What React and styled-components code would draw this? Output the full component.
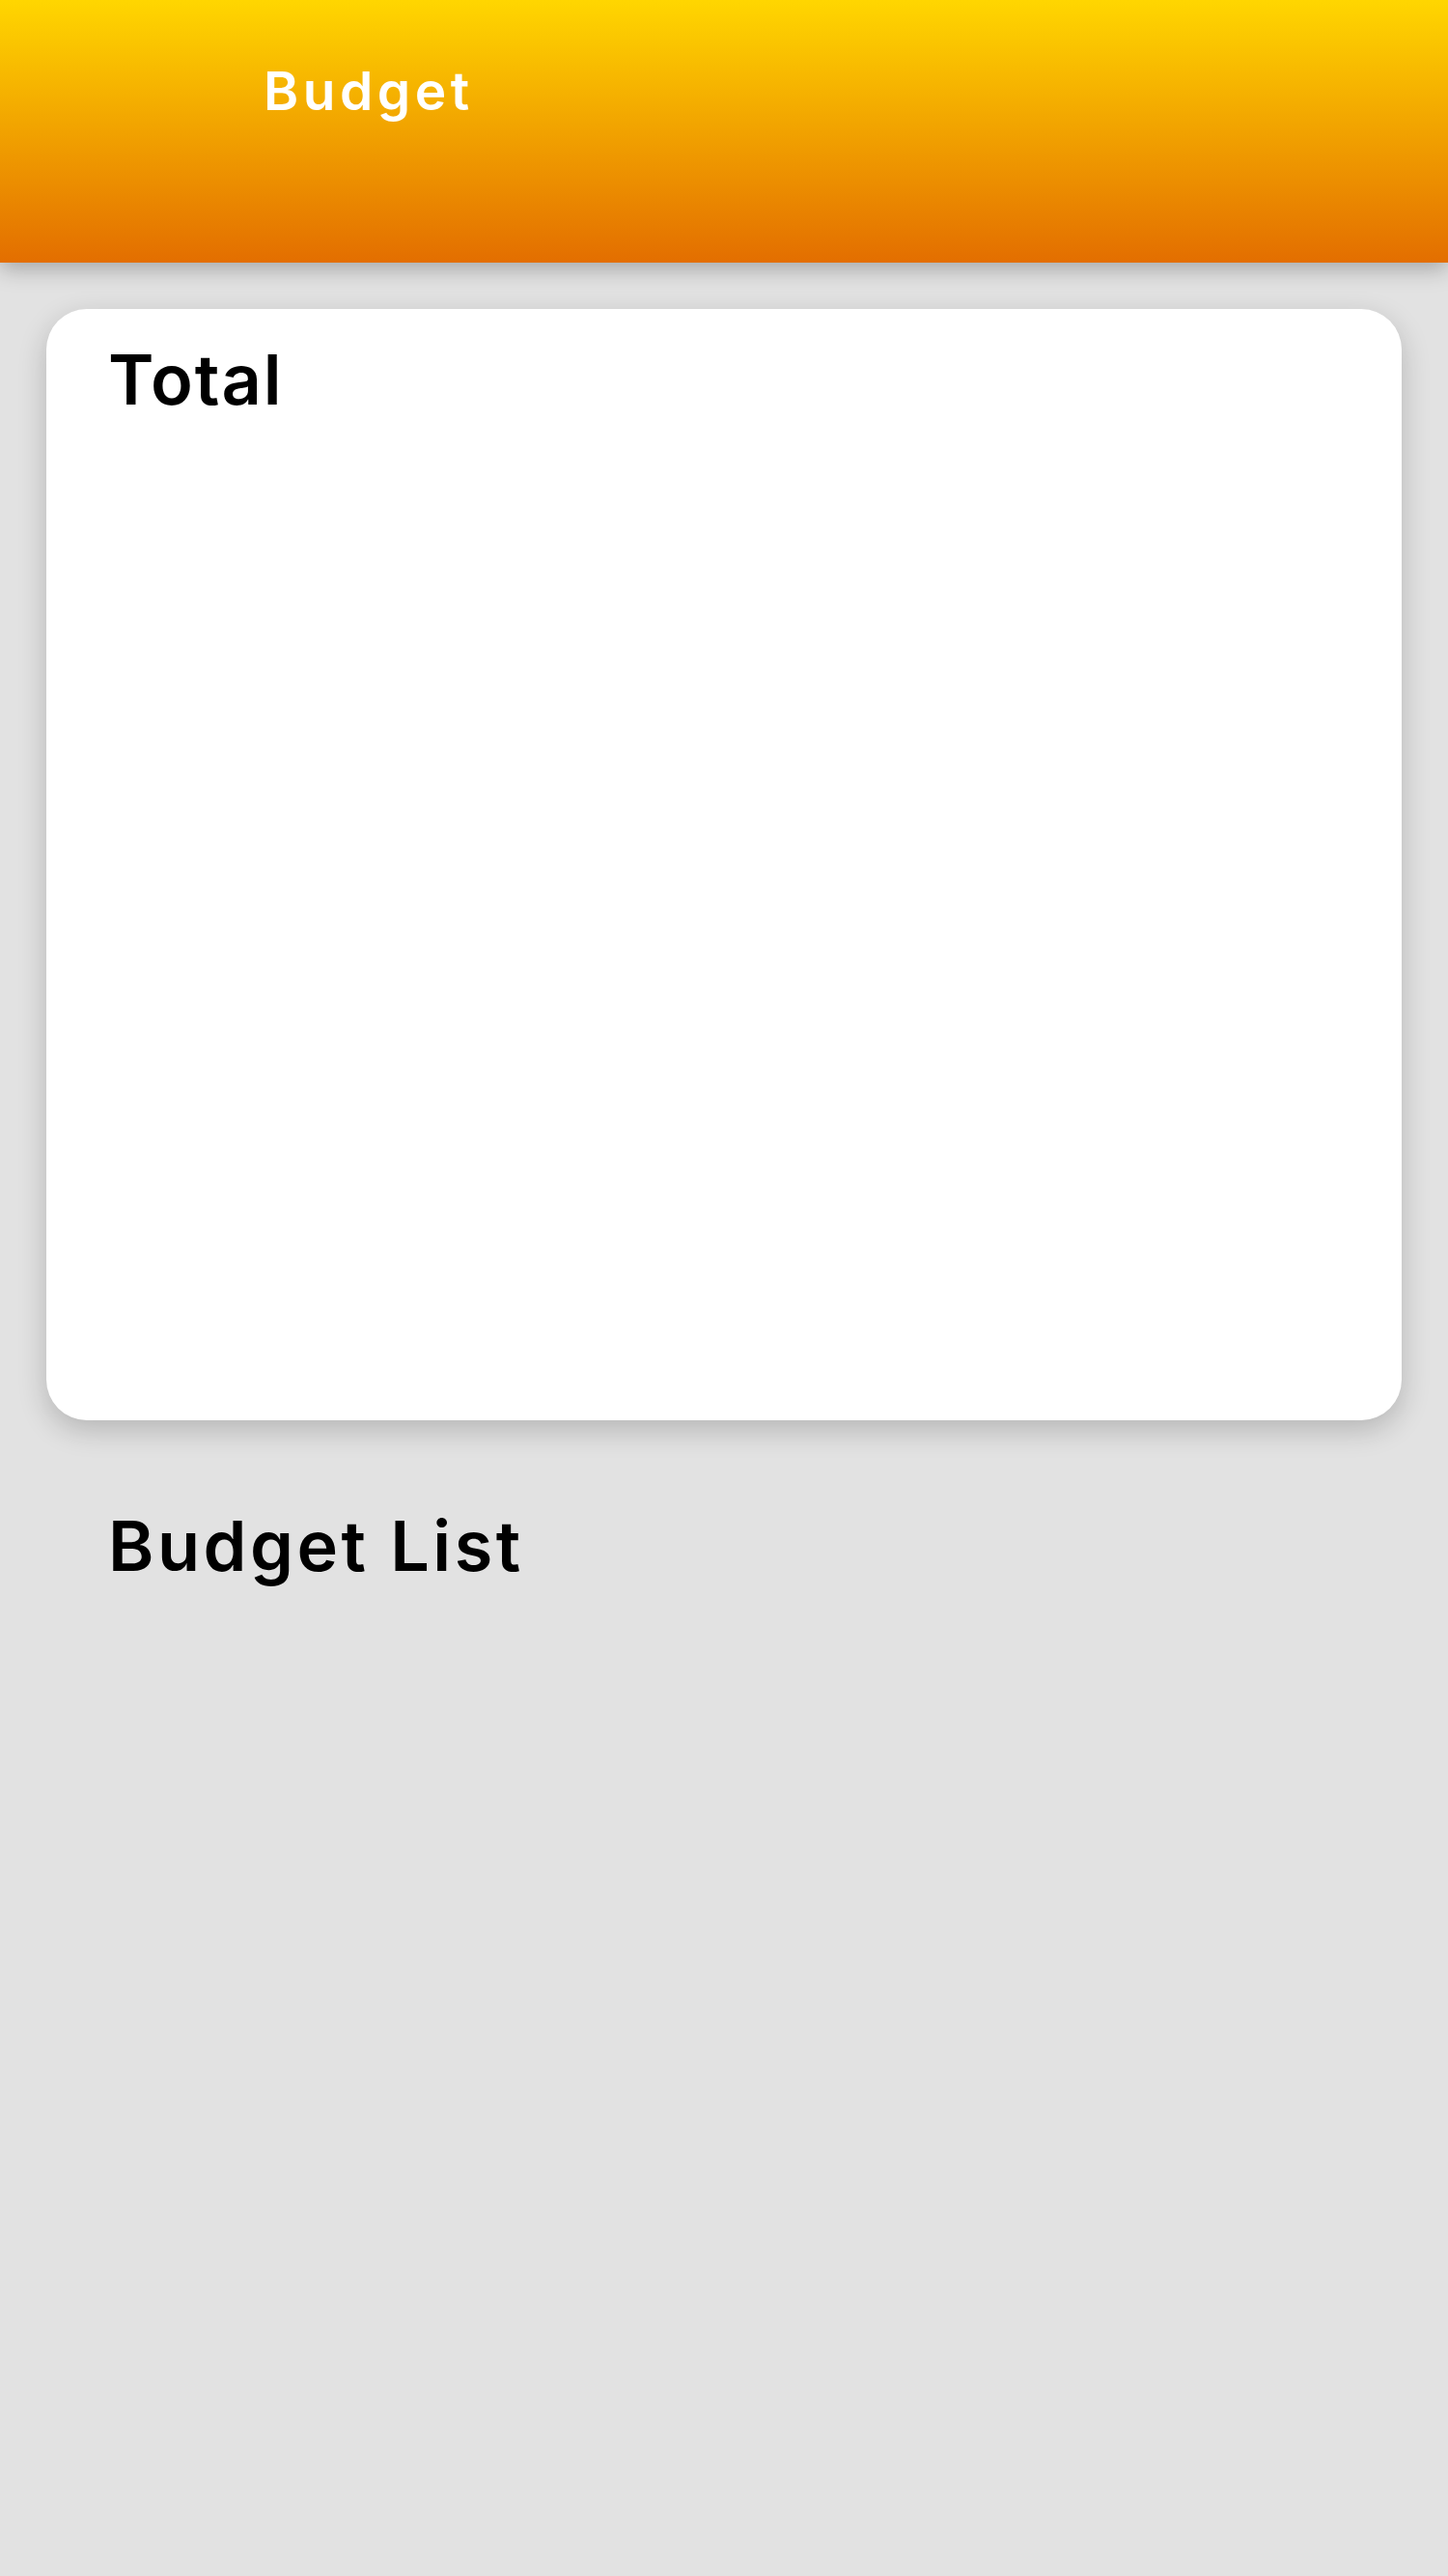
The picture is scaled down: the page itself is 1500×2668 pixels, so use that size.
import React from "react";
import styled, { createGlobalStyle } from "styled-components";

const GlobalStyle = createGlobalStyle`
  html, body {
    margin: 0;
    padding: 0;
    background: #e2e2e2;
    font-family: Inter, "Open Sans", sans-serif;
  }
  * { box-sizing: border-box; }
`;

const Page = styled.div`
  min-height: 2668px;
  background: #e2e2e2;
  display: flex;
  flex-direction: column;
`;

const Header = styled.header`
  height: 272px;
  padding: 61px 0 0 273px;
  background: linear-gradient(180deg, #ffd600 0%, #e36e00 100%);
  box-shadow: 0 6px 22px rgba(0, 0, 0, 0.28);
  position: relative;
  z-index: 1;
`;

const HeaderTitle = styled.h1`
  margin: 0;
  color: #ffffff;
  font-size: 55px;
  line-height: 1.2;
  font-weight: 600;
  letter-spacing: 4.5px;
`;

const Main = styled.main`
  display: flex;
  flex-direction: column;
  padding: 48px 48px 0;
`;

const Card = styled.section`
  height: 1151px;
  background: #ffffff;
  border-radius: 42px;
  padding: 30px 64px 0;
  box-shadow: 0 10px 30px rgba(0, 0, 0, 0.2);
`;

const SectionTitle = styled.h2`
  margin: 0;
  color: #000000;
  font-size: 72px;
  line-height: 1.2;
  font-weight: 600;
  letter-spacing: ${(p) => p.$spacing || "2px"};
`;

const ListSection = styled.section`
  padding: 87px 64px 0;
`;

export default function App() {
  return (
    <>
      <GlobalStyle />
      <Page>
        <Header>
          <HeaderTitle>Budget</HeaderTitle>
        </Header>
        <Main>
          <Card>
            <SectionTitle>Total</SectionTitle>
          </Card>
          <ListSection>
            <SectionTitle $spacing="3.5px">Budget List</SectionTitle>
          </ListSection>
        </Main>
      </Page>
    </>
  );
}
